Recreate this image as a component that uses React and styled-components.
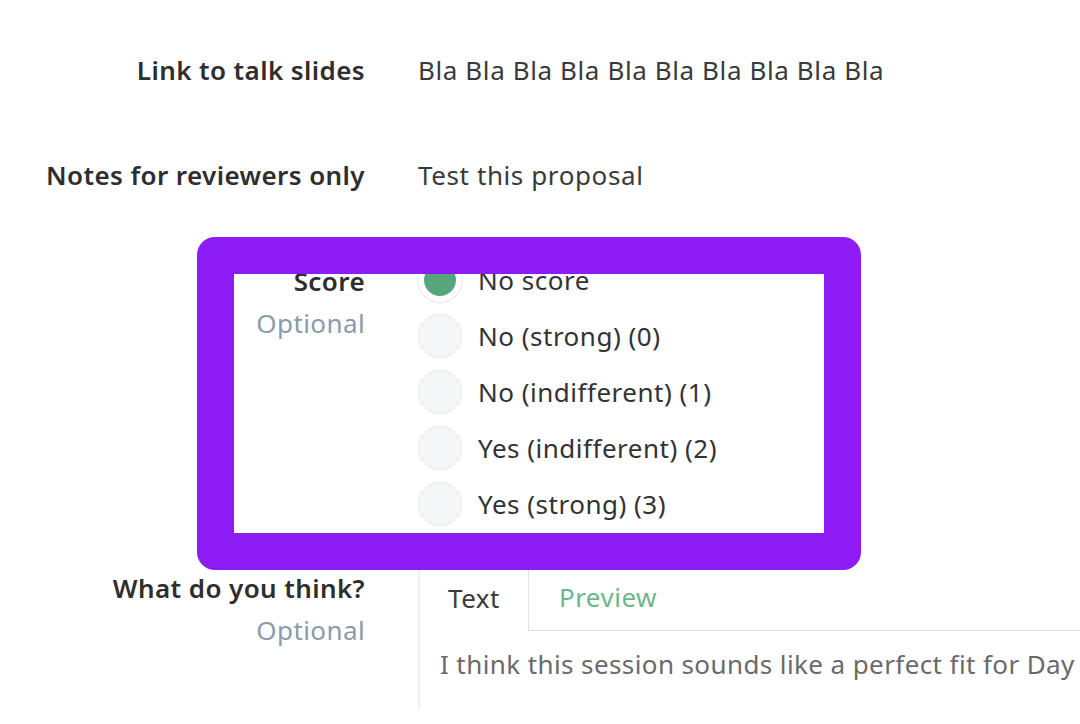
import React from "react";
import styled, { createGlobalStyle } from "styled-components";

const Global = createGlobalStyle`
  html, body { margin: 0; padding: 0; background: #fff; overflow: hidden; }
  body { font-family: "Noto Sans", Lato, sans-serif; color: #333; }
`;

const Page = styled.div`
  position: relative;
  width: 1080px;
  height: 724px;
  overflow: hidden;
  padding-top: 54px;
  box-sizing: border-box;
`;

const Row = styled.div`
  display: grid;
  grid-template-columns: 365px 1fr;
  column-gap: 53px;
  margin-bottom: ${(p) => p.$gap || 0}px;
`;

const LabelCol = styled.div`
  text-align: right;
  display: flex;
  flex-direction: column;
  align-items: flex-end;
  gap: 10px;
`;

const Label = styled.div`
  font-size: 26px;
  line-height: 32px;
  font-weight: 600;
  letter-spacing: 0.4px;
  color: #2e2e2e;
  white-space: nowrap;
`;

const Optional = styled.div`
  font-size: 26px;
  line-height: 32px;
  letter-spacing: 0.4px;
  color: #8a9bab;
`;

const Value = styled.div`
  font-size: 26px;
  line-height: 32px;
  letter-spacing: 0.6px;
  color: #3a3a3a;
  white-space: nowrap;
`;

const RadioList = styled.div`
  display: flex;
  flex-direction: column;
  margin-top: -13px;
`;

const RadioRow = styled.label`
  display: flex;
  align-items: center;
  gap: 16px;
  height: 56px;
  font-size: 26px;
  letter-spacing: 0.5px;
  color: #333;
  white-space: nowrap;
`;

const Circle = styled.span`
  width: 44px;
  height: 44px;
  box-sizing: border-box;
  border-radius: 50%;
  flex: none;
  background: ${(p) => (p.$on ? "#57a679" : "#f5f6f8")};
  border: ${(p) => (p.$on ? "6px solid #fff" : "1px solid #e7e9ec")};
  box-shadow: ${(p) => (p.$on ? "0 0 0 1px #e6e9ec" : "none")};
`;

const Editor = styled.div`
  border-left: 2px solid #eef0f2;
  height: 140px;
  margin-top: -2px;
  display: flex;
  flex-direction: column;
`;

const Tabs = styled.div`
  display: flex;
  height: 61px;
`;

const Tab = styled.div`
  padding: 0 28px 6px;
  display: flex;
  align-items: center;
  font-size: 26px;
  letter-spacing: 0.5px;
  color: ${(p) => (p.$active ? "#3a3a3a" : "#6cb68b")};
  ${(p) =>
    p.$active
      ? ""
      : `border-left: 1px solid #dde4e0; border-bottom: 1px solid #dde4e0; flex: 1; padding-left: 30px;`}
`;

const TextArea = styled.div`
  padding: 18px 20px;
  font-size: 26px;
  line-height: 30px;
  letter-spacing: 0.4px;
  color: #6a6a6a;
  white-space: nowrap;
`;

const Highlight = styled.div`
  position: absolute;
  left: 197px;
  top: 237px;
  width: 664px;
  height: 333px;
  box-sizing: border-box;
  border: 37px solid #8d1cf4;
  border-radius: 18px;
  pointer-events: none;
`;

const options = [
  "No score",
  "No (strong) (0)",
  "No (indifferent) (1)",
  "Yes (indifferent) (2)",
  "Yes (strong) (3)",
];

export default function App() {
  return (
    <Page>
      <Global />
      <Row $gap={73}>
        <LabelCol>
          <Label>Link to talk slides</Label>
        </LabelCol>
        <Value>Bla Bla Bla Bla Bla Bla Bla Bla Bla Bla</Value>
      </Row>
      <Row $gap={74}>
        <LabelCol>
          <Label>Notes for reviewers only</Label>
        </LabelCol>
        <Value>Test this proposal</Value>
      </Row>
      <Row $gap={40}>
        <LabelCol>
          <Label>Score</Label>
          <Optional>Optional</Optional>
        </LabelCol>
        <RadioList>
          {options.map((o, i) => (
            <RadioRow key={o}>
              <Circle $on={i === 0} />
              {o}
            </RadioRow>
          ))}
        </RadioList>
      </Row>
      <Row>
        <LabelCol>
          <Label>What do you think?</Label>
          <Optional>Optional</Optional>
        </LabelCol>
        <Editor>
          <Tabs>
            <Tab $active>Text</Tab>
            <Tab>Preview</Tab>
          </Tabs>
          <TextArea>I think this session sounds like a perfect fit for Day</TextArea>
        </Editor>
      </Row>
      <Highlight />
    </Page>
  );
}
